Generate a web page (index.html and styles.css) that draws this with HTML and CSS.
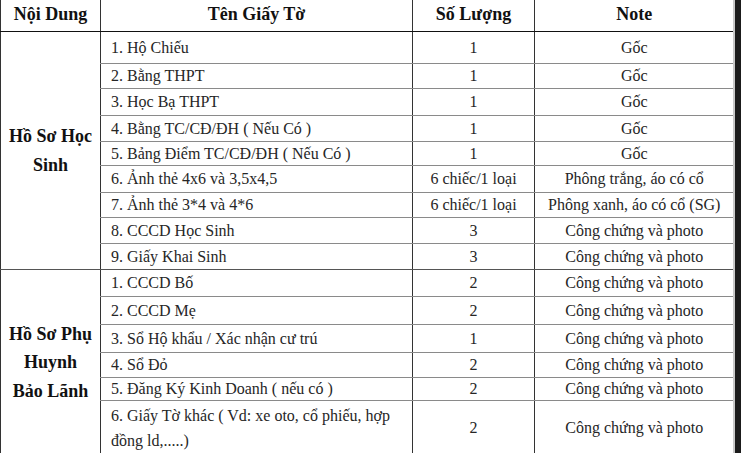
FILE: index.html
```html
<!DOCTYPE html>
<html lang="vi">
<head>
<meta charset="utf-8">
<title>Hồ sơ</title>
<link rel="stylesheet" href="styles.css">
</head>
<body>
<div class="page">
<table class="docs">
  <colgroup>
    <col class="c1"><col class="c2"><col class="c3"><col class="c4">
  </colgroup>
  <thead>
    <tr class="head">
      <th>Nội Dung</th>
      <th>Tên Giấy Tờ</th>
      <th>Số Lượng</th>
      <th>Note</th>
    </tr>
  </thead>
  <tbody>
    <tr class="h32">
      <td class="group" rowspan="9">Hồ Sơ Học<br>Sinh</td>
      <td class="name">1. Hộ Chiếu</td><td class="num">1</td><td class="note">Gốc</td>
    </tr>
    <tr class="h25"><td class="name">2. Bằng THPT</td><td class="num">1</td><td class="note">Gốc</td></tr>
    <tr class="h27"><td class="name">3. Học Bạ THPT</td><td class="num">1</td><td class="note">Gốc</td></tr>
    <tr class="h26"><td class="name">4. Bằng TC/CĐ/ĐH ( Nếu Có )</td><td class="num">1</td><td class="note">Gốc</td></tr>
    <tr class="h24"><td class="name">5. Bảng Điểm TC/CĐ/ĐH ( Nếu Có )</td><td class="num">1</td><td class="note">Gốc</td></tr>
    <tr class="h27"><td class="name">6. Ảnh thẻ 4x6 và 3,5x4,5</td><td class="num">6 chiếc/1 loại</td><td class="note">Phông trắng, áo có cổ</td></tr>
    <tr class="h25"><td class="name">7. Ảnh thẻ 3*4 và 4*6</td><td class="num">6 chiếc/1 loại</td><td class="note">Phông xanh, áo có cổ (SG)</td></tr>
    <tr class="h26"><td class="name">8. CCCD Học Sinh</td><td class="num">3</td><td class="note">Công chứng và photo</td></tr>
    <tr class="h26"><td class="name">9. Giấy Khai Sinh</td><td class="num">3</td><td class="note">Công chứng và photo</td></tr>
  </tbody>
  <tbody class="section">
    <tr class="h27">
      <td class="group" rowspan="6">Hồ Sơ Phụ<br>Huynh<br>Bảo Lãnh</td>
      <td class="name">1. CCCD Bố</td><td class="num">2</td><td class="note">Công chứng và photo</td>
    </tr>
    <tr class="h28"><td class="name">2. CCCD Mẹ</td><td class="num">2</td><td class="note">Công chứng và photo</td></tr>
    <tr class="h28"><td class="name">3. Sổ Hộ khẩu / Xác nhận cư trú</td><td class="num">1</td><td class="note">Công chứng và photo</td></tr>
    <tr class="h25"><td class="name">4. Sổ Đỏ</td><td class="num">2</td><td class="note">Công chứng và photo</td></tr>
    <tr class="h23"><td class="name">5. Đăng Ký Kinh Doanh ( nếu có )</td><td class="num">2</td><td class="note">Công chứng và photo</td></tr>
    <tr class="h55"><td class="name two">6. Giấy Tờ khác ( Vd: xe oto, cổ phiếu, hợp<br>đồng ld,.....)</td><td class="num">2</td><td class="note">Công chứng và photo</td></tr>
  </tbody>
</table>
</div>
</body>
</html>
```

FILE: styles.css
```css
html, body {
  margin: 0;
  padding: 0;
  background: #1b1b1b;
  height: 100%;
  overflow: hidden;
}

.page {
  width: 733px;
  height: 453px;
  background: #ffffff;
  border-right: 2px solid #c8c8c8;
  overflow: hidden;
}

.docs {
  border-collapse: collapse;
  table-layout: fixed;
  width: 733px;
  font-family: "Liberation Serif", "Times New Roman", serif;
  font-size: 16px;
  color: #262626;
}

.c1 { width: 100px; }
.c2 { width: 312px; }
.c3 { width: 122px; }
.c4 { width: 199px; }

.docs th,
.docs td {
  padding: 0;
  border-left: 1px solid #333;
  border-bottom: 1px solid #8a8a8a;
  vertical-align: middle;
  line-height: 18px;
}

.docs th {
  height: 28px;
  padding-bottom: 3px;
  font-size: 18px;
  font-weight: bold;
  color: #111;
  border-bottom: 1px solid #111;
  border-top: none;
  text-align: center;
}

.docs .group {
  font-size: 18px;
  font-weight: bold;
  color: #111;
  text-align: center;
  line-height: 28.5px;
  border-bottom: 1px solid #555;
}

.docs .name {
  padding-left: 10px;
  text-align: left;
  white-space: nowrap;
}

.docs .name.two {
  line-height: 25px;
  vertical-align: top;
  padding-top: 2px;
}

.docs .num,
.docs .note {
  text-align: center;
  white-space: nowrap;
}

.docs tbody:first-of-type tr:last-child td {
  border-bottom: 1px solid #555;
}

.h23 { height: 23px; }
.h24 { height: 24px; }
.h25 { height: 25px; }
.h26 { height: 26px; }
.h27 { height: 27px; }
.h28 { height: 28px; }
.h32 { height: 32px; }
.h55 { height: 55px; }
```
